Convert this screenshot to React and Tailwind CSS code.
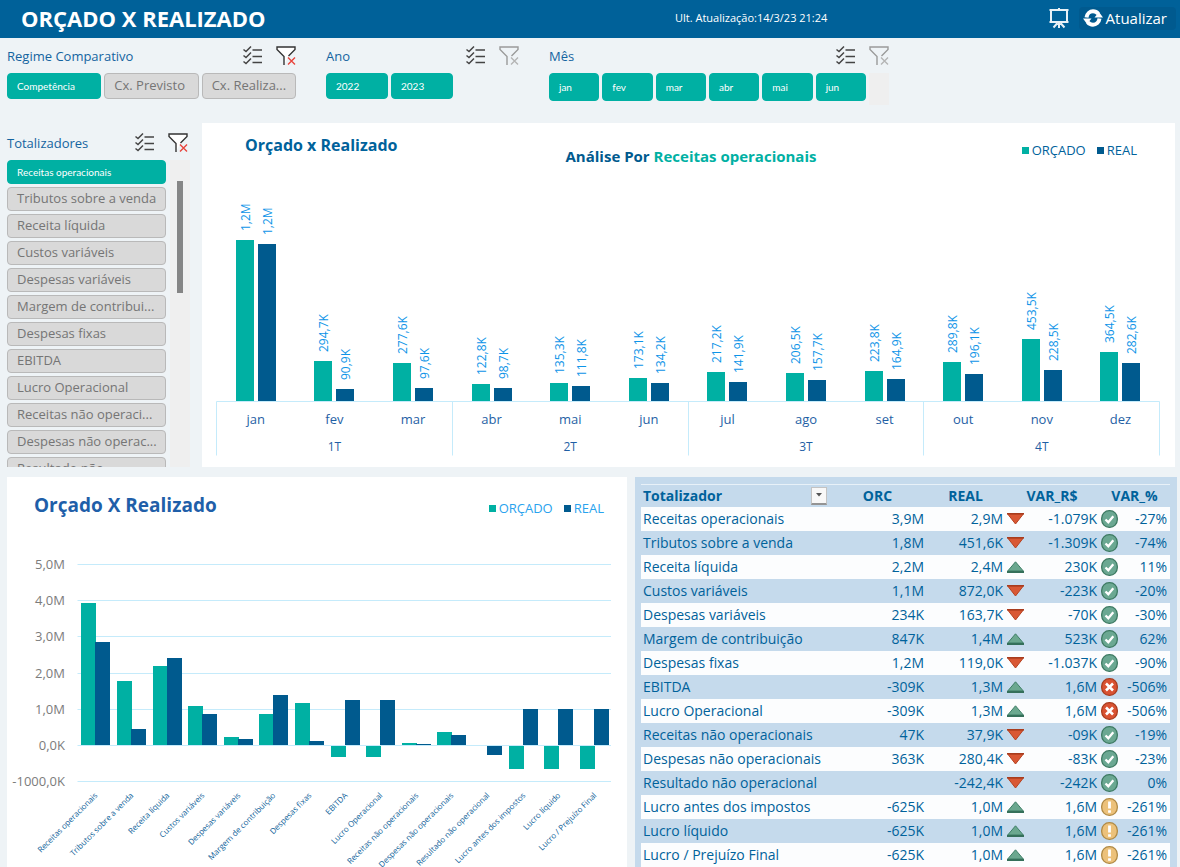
import { useState } from "react";
import clsx from "clsx";

const months = [
  { name: "jan", orc: 1186, real: 1157, orcLabel: "1,2M", realLabel: "1,2M" },
  { name: "fev", orc: 294.7, real: 90.9 },
  { name: "mar", orc: 277.6, real: 97.6 },
  { name: "abr", orc: 122.8, real: 98.7 },
  { name: "mai", orc: 135.3, real: 111.8 },
  { name: "jun", orc: 173.1, real: 134.2 },
  { name: "jul", orc: 217.2, real: 141.9 },
  { name: "ago", orc: 206.5, real: 157.7 },
  { name: "set", orc: 223.8, real: 164.9 },
  { name: "out", orc: 289.8, real: 196.1 },
  { name: "nov", orc: 453.5, real: 228.5 },
  { name: "dez", orc: 364.5, real: 282.6 },
];

// orcM / realM are in millions and feed the chart, the other fields are shown in the table
const rows = [
  { name: "Receitas operacionais", orcM: 3.93, realM: 2.85, orc: "3,9M", real: "2,9M", trend: "down", diff: "-1.079K", status: "ok", pct: "-27%" },
  { name: "Tributos sobre a venda", orcM: 1.76, realM: 0.45, orc: "1,8M", real: "451,6K", trend: "down", diff: "-1.309K", status: "ok", pct: "-74%" },
  { name: "Receita líquida", orcM: 2.17, realM: 2.4, orc: "2,2M", real: "2,4M", trend: "up", diff: "230K", status: "ok", pct: "11%" },
  { name: "Custos variáveis", orcM: 1.09, realM: 0.87, orc: "1,1M", real: "872,0K", trend: "down", diff: "-223K", status: "ok", pct: "-20%" },
  { name: "Despesas variáveis", orcM: 0.23, realM: 0.16, orc: "234K", real: "163,7K", trend: "down", diff: "-70K", status: "ok", pct: "-30%" },
  { name: "Margem de contribuição", short: "Margem de contribui...", orcM: 0.85, realM: 1.37, orc: "847K", real: "1,4M", trend: "up", diff: "523K", status: "ok", pct: "62%" },
  { name: "Despesas fixas", orcM: 1.15, realM: 0.12, orc: "1,2M", real: "119,0K", trend: "down", diff: "-1.037K", status: "ok", pct: "-90%" },
  { name: "EBITDA", orcM: -0.31, realM: 1.25, orc: "-309K", real: "1,3M", trend: "up", diff: "1,6M", status: "bad", pct: "-506%" },
  { name: "Lucro Operacional", orcM: -0.31, realM: 1.25, orc: "-309K", real: "1,3M", trend: "up", diff: "1,6M", status: "bad", pct: "-506%" },
  { name: "Receitas não operacionais", short: "Receitas não operaci...", orcM: 0.047, realM: 0.038, orc: "47K", real: "37,9K", trend: "down", diff: "-09K", status: "ok", pct: "-19%" },
  { name: "Despesas não operacionais", short: "Despesas não operac...", orcM: 0.36, realM: 0.28, orc: "363K", real: "280,4K", trend: "down", diff: "-83K", status: "ok", pct: "-23%" },
  { name: "Resultado não operacional", short: "Resultado não ...", orcM: 0, realM: -0.24, orc: "", real: "-242,4K", trend: "down", diff: "-242K", status: "ok", pct: "0%" },
  { name: "Lucro antes dos impostos", orcM: -0.625, realM: 1.0, orc: "-625K", real: "1,0M", trend: "up", diff: "1,6M", status: "warn", pct: "-261%" },
  { name: "Lucro líquido", orcM: -0.625, realM: 1.0, orc: "-625K", real: "1,0M", trend: "up", diff: "1,6M", status: "warn", pct: "-261%" },
  { name: "Lucro / Prejuízo Final", orcM: -0.625, realM: 1.0, orc: "-625K", real: "1,0M", trend: "up", diff: "1,6M", status: "warn", pct: "-261%" },
];

const formatK = (value) => `${value.toFixed(1).replace(".", ",")}K`;

function ChecklistIcon() {
  return (
    <svg width="20" height="20" viewBox="0 0 20 20" fill="none" stroke="#444" strokeWidth="1.5">
      <path d="M0.500 3.500l2.500 2 5-5M0.500 9.500l2.500 2 5-5M0.500 15.500l2.500 2 5-5" />
      <path d="M9.500 4h9.500M9.500 10.500h9.500M9.500 16.500h9.500" />
    </svg>
  );
}

function ClearFilterIcon({ active }) {
  return (
    <svg width="20" height="20" viewBox="0 0 20 20" fill="none" strokeWidth="1.400">
      <path
        d="M8 19V10.500L1 3.500V1h18v2.500L12.500 10"
        stroke={active ? "#333" : "#9a9a9a"}
        fill={active ? "#fff" : "none"}
      />
      <path d="M12 11.500l7 7M19 11.500l-7 7" stroke={active ? "#e8443c" : "#b4b4b4"} />
    </svg>
  );
}

function PresentationIcon() {
  return (
    <svg width="20" height="21" viewBox="0 0 20 21" fill="none" stroke="#e8f1f7" strokeWidth="2">
      <path d="M0.500 2h19M10 0v2M2 2v12h16V2M0.500 14h19" />
      <path d="M10 14v6M8.500 15l-4 4.500M11.500 15l4 4.500" />
    </svg>
  );
}

function RefreshIcon() {
  return (
    <svg width="20" height="18" viewBox="0 0 20 18" fill="none" stroke="#fff" strokeWidth="4">
      <path d="M3.500 8.500C4 4.500 7 2.300 10 2.300c2.200 0 4 .9 5.200 2.400" />
      <path d="M16.500 9.500c-.5 4-3.500 6.200-6.500 6.200-2.200 0-4-.9-5.200-2.400" />
      <path d="M11.500 8.500H20L16 3z M8.500 9.500H0l4 5.500z" fill="#fff" stroke="none" />
    </svg>
  );
}

function TrendIcon({ trend }) {
  return trend === "up" ? (
    <svg width="17" height="12" viewBox="0 0 17 12" role="img" aria-label="Acima">
      <path d="M8.500 0.800L16.300 10H0.700z" fill="#6ba88f" stroke="#3f7f67" />
      <path d="M0 11h17" stroke="#35705a" strokeWidth="2" />
    </svg>
  ) : (
    <svg width="17" height="12" viewBox="0 0 17 12" role="img" aria-label="Abaixo">
      <path d="M0.700 1h15.600L8.500 11z" fill="#d95834" stroke="#b5401f" />
      <path d="M0 .7h17" stroke="#a83c1e" strokeWidth="1.400" />
    </svg>
  );
}

function StatusIcon({ status }) {
  if (status === "ok") {
    return (
      <svg width="17" height="18" viewBox="0 0 17 18" role="img" aria-label="Bom">
        <rect x=".7" y=".7" width="15.600" height="16.600" rx="7.500" fill="#6ba892" stroke="#3d7a62" strokeWidth="1.300" />
        <path d="M4.500 9.500l2.800 2.700 5-6" fill="none" stroke="#fff" strokeWidth="2.300" />
      </svg>
    );
  }
  if (status === "bad") {
    return (
      <svg width="17" height="18" viewBox="0 0 17 18" role="img" aria-label="Ruim">
        <rect x=".7" y=".7" width="15.600" height="16.600" rx="7.500" fill="#d95232" stroke="#a83c1e" strokeWidth="1.300" />
        <path d="M5 5.500l7 7M12 5.500l-7 7" stroke="#fff" strokeWidth="2.600" />
      </svg>
    );
  }
  return (
    <svg width="17" height="18" viewBox="0 0 17 18" role="img" aria-label="Atenção">
      <rect x=".7" y=".7" width="15.600" height="16.600" rx="7.500" fill="#ecc17a" stroke="#b08a45" strokeWidth="1.300" />
      <path d="M8.500 3.500v7M8.500 12.300v2.500" stroke="#fff" strokeWidth="2.800" />
    </svg>
  );
}

function SlicerHeader({ title, active }) {
  return (
    <div className="flex h-5 items-center">
      <h2 className="flex-1 text-[13px] leading-5 text-[#1464a0]">{title}</h2>
      <button type="button" aria-label={`Seleção múltipla: ${title}`}>
        <ChecklistIcon />
      </button>
      <button type="button" aria-label={`Limpar filtro: ${title}`} className="ml-[13px]">
        <ClearFilterIcon active={active} />
      </button>
    </div>
  );
}

function SlicerButton({ label, selected, onClick, className }) {
  return (
    <button
      type="button"
      aria-pressed={selected}
      onClick={onClick}
      className={clsx(
        "rounded-[4px] border pl-[9px] text-left whitespace-nowrap",
        selected
          ? "border-[#00b0a3] bg-[#00b0a3] font-[Lato,sans-serif] text-[10px] text-white"
          : "border-[#b9b9b9] bg-[#d9d9d9] text-[13px] text-[#757575]",
        className
      )}
    >
      {label}
    </button>
  );
}

function Legend({ className }) {
  return (
    <ul className={clsx("flex gap-[11px] text-[13px] leading-5", className)}>
      <li className="flex items-center gap-[3px]">
        <span className="size-[7px] bg-[#00b0a3]" />
        ORÇADO
      </li>
      <li className="flex items-center gap-[3px]">
        <span className="size-[7px] bg-[#005a8e]" />
        REAL
      </li>
    </ul>
  );
}

function MonthlyChart() {
  const left = 14.5;
  const step = 78.6;
  const base = 228.5;
  const scale = 0.1357;

  const bar = (value, label, x) => {
    const height = Math.round(value * scale);
    return (
      <>
        <rect x={Math.round(x)} y={228 - height} width="18" height={height} />
        <text
          transform={`translate(${Math.round(x) + 14} ${219 - height}) rotate(-90)`}
          className="fill-[#0d94e8] text-[12px] font-medium"
        >
          {label}
        </text>
      </>
    );
  };

  return (
    <svg viewBox="0 0 973 294" className="block w-full" role="img" aria-label="Orçado x Realizado por mês">
      {months.map((m, i) => {
        const center = left + step * (i + 0.5);
        return (
          <g key={m.name}>
            <g className="fill-[#00b0a3]">{bar(m.orc, m.orcLabel || formatK(m.orc), center - 20)}</g>
            <g className="fill-[#005a8e]">{bar(m.real, m.realLabel || formatK(m.real), center + 2)}</g>
            <text x={center} y="251" textAnchor="middle" className="fill-[#1f5fa5] text-[13px]">
              {m.name}
            </text>
          </g>
        );
      })}
      <path d={`M${left} ${base}H957.500`} stroke="#c5ebfb" />
      {[0, 1, 2, 3, 4].map((q) => (
        <path key={q} d={`M${Math.round(14 + q * step * 3) + 0.5} ${base}v54`} stroke="#c5ebfb" />
      ))}
      {["1T", "2T", "3T", "4T"].map((q, i) => (
        <text
          key={q}
          x={left + step * 3 * (i + 0.5)}
          y="278"
          textAnchor="middle"
          className="fill-[#1f5fa5] text-[12px]"
        >
          {q}
        </text>
      ))}
    </svg>
  );
}

function TotalsChart() {
  const left = 70.5;
  const step = 35.6;
  const unit = 36.2;
  const zero = 208;
  const ticks = ["5,0M", "4,0M", "3,0M", "2,0M", "1,0M", "0,0K", "-1000,0K"];

  const bar = (value, x, fill) => {
    const height = Math.round(Math.abs(value) * unit);
    return <rect x={x} y={value < 0 ? zero + 1 : zero - height} width="15" height={height} className={fill} />;
  };

  return (
    <svg viewBox="0 0 620 330" className="block w-full" role="img" aria-label="Orçado x Realizado por totalizador">
      {ticks.map((tick, i) => {
        const y = Math.round(27 + i * unit) + 0.5;
        return (
          <g key={tick}>
            <path d={`M${left} ${y}H604`} stroke="#c5ebfb" />
            <text x="58" y={y + 4} textAnchor="end" className="fill-[#7c7c7c] text-[13px]">
              {tick}
            </text>
          </g>
        );
      })}
      {rows.map((row, i) => {
        const center = left + step * (i + 0.5);
        const x = Math.round(center);
        return (
          <g key={row.name}>
            {bar(row.orcM, x - 14, "fill-[#00b0a3]")}
            {bar(row.realM, x, "fill-[#005a8e]")}
            <text
              transform={`translate(${x + 3} 259) rotate(-45)`}
              textAnchor="end"
              className="fill-[#0f629a] text-[8px] font-medium"
            >
              {row.name}
            </text>
          </g>
        );
      })}
    </svg>
  );
}

function TotalsTable() {
  return (
    <table className="w-full table-fixed border-collapse text-[14px] leading-6 text-[#00629b]">
      <colgroup>
        <col />
        <col className="w-[97px]" />
        <col className="w-[79px]" />
        <col className="w-[94px]" />
        <col className="w-[71px]" />
      </colgroup>
      <thead>
        <tr className="h-[23px] text-[14px] leading-[22px] shadow-[inset_0_1px_0_#e8f1f8]">
          <th className="p-0 pr-[2px] pl-[2px] text-left">
            <div className="flex items-center justify-between">
              Totalizador
              <button
                type="button"
                aria-label="Filtrar Totalizador"
                className="flex h-[18px] w-4 items-center justify-center border border-b-2 border-[#c3c3c3] border-b-[#949494] bg-[#f8f8f8]"
              >
                <svg width="6" height="4" viewBox="0 0 6 4">
                  <path d="M0 0h6L3 3.500z" fill="#555" />
                </svg>
              </button>
            </div>
          </th>
          <th className="p-0">ORC</th>
          <th className="p-0">REAL</th>
          <th className="p-0">VAR_R$</th>
          <th className="p-0">VAR_%</th>
        </tr>
      </thead>
      <tbody>
        {rows.map((row) => (
          <tr key={row.name} className="h-6 odd:bg-[#fcfdfe]">
            <td className="truncate p-0 pl-[2px]">{row.name}</td>
            <td className="p-0 pr-[2px] text-right">{row.orc}</td>
            <td className="p-0 pr-[2px] text-right">{row.real}</td>
            <td className="p-0 px-[2px]">
              <div className="flex items-center justify-between">
                <TrendIcon trend={row.trend} />
                {row.diff}
              </div>
            </td>
            <td className="p-0 pr-[3px] pl-[2px]">
              <div className="flex items-center justify-between">
                <StatusIcon status={row.status} />
                {row.pct}
              </div>
            </td>
          </tr>
        ))}
      </tbody>
    </table>
  );
}

export default function App() {
  const [regime, setRegime] = useState("Competência");
  const [total, setTotal] = useState("Receitas operacionais");

  return (
    <div className="flex min-h-screen flex-col bg-[#eef3f6] font-['Open_Sans','Noto_Sans',sans-serif]">
      <header className="grid h-[38px] grid-cols-[654fr_501fr] items-center bg-[#006199] pr-1 pb-[2px] pl-[21px] text-white">
        <h1 className="text-[22px] leading-7 font-bold">ORÇADO X REALIZADO</h1>
        <div className="flex items-center gap-[10px]">
          <p className="flex-1 text-[11px]">Ult. Atualização:14/3/23 21:24</p>
          <button type="button" aria-label="Modo apresentação">
            <PresentationIcon />
          </button>
          <button
            type="button"
            className="flex h-[23px] items-center gap-[3px] rounded-[4px] bg-[#005a8f] pr-[9px] pl-1 text-[15px]"
          >
            <RefreshIcon />
            Atualizar
          </button>
        </div>
      </header>

      {/* Filters */}
      <section className="flex h-[85px] gap-[30px] pt-2 pl-[7px]">
        <div className="w-[289px]">
          <SlicerHeader title="Regime Comparativo" active />
          <div className="mt-[7px] flex gap-[3px]">
            {["Competência", "Cx. Previsto", "Cx. Realiza..."].map((label) => (
              <SlicerButton
                key={label}
                label={label}
                selected={regime === label}
                onClick={() => setRegime(label)}
                className="h-[26px] flex-1 basis-0"
              />
            ))}
          </div>
        </div>
        <div className="w-[193px]">
          <SlicerHeader title="Ano" />
          <div className="mt-[7px] flex gap-[3px]">
            <SlicerButton label="2022" selected className="h-[26px] w-[62px]" />
            <SlicerButton label="2023" selected className="h-[26px] w-[62px]" />
          </div>
        </div>
        <div className="w-[340px]">
          <SlicerHeader title="Mês" />
          <div className="mt-[7px] flex gap-[3px]">
            {["jan", "fev", "mar", "abr", "mai", "jun"].map((label) => (
              <SlicerButton key={label} label={label} selected className="h-7 flex-1" />
            ))}
            <div className="h-8 w-5 bg-[#efefef]" />
          </div>
        </div>
      </section>

      <section className="flex">
        <aside className="w-[202px] shrink-0 pt-[10px] pl-[7px]">
          <div className="w-[181px]">
            <SlicerHeader title="Totalizadores" active />
          </div>
          <div className="mt-[7px] flex h-[307px] gap-1 overflow-hidden">
            <div className="flex w-[159px] flex-col gap-[3px]">
              {rows.slice(0, 12).map((row) => (
                <SlicerButton
                  key={row.name}
                  label={row.short || row.name}
                  selected={total === row.name}
                  onClick={() => setTotal(row.name)}
                  className="h-6 shrink-0"
                />
              ))}
            </div>
            <div className="flex w-5 justify-center bg-[#efefef] pt-[21px]">
              <div className="h-28 w-[6px] bg-[#858585]" />
            </div>
          </div>
        </aside>

        <div className="mr-[5px] flex-1 bg-white">
          <div className="grid h-[50px] grid-cols-[1fr_auto_1fr] items-start pt-3 pr-[38px] pl-[43px]">
            <h2 className="text-[16px] leading-5 font-bold text-[#00629b]">Orçado x Realizado</h2>
            <h3 className="mt-[11px] text-[15px] leading-5 font-bold text-[#005a8e]">
              Análise Por <span className="text-[#00b0a3]">{total}</span>
            </h3>
            <Legend className="mt-[5px] justify-end text-[#00629b]" />
          </div>
          <MonthlyChart />
        </div>
      </section>

      <section className="mt-[10px] grid flex-1 grid-cols-[620fr_542fr] gap-2 pr-[3px] pl-[7px]">
        <div className="bg-white">
          <div className="flex h-[60px] items-start justify-between pt-4 pr-[23px] pl-[27px]">
            <h2 className="text-[19px] leading-6 font-bold text-[#1f5fa9]">Orçado X Realizado</h2>
            <Legend className="mt-[5px] text-[#29a3ee]" />
          </div>
          <TotalsChart />
        </div>
        <div className="bg-[#c5daec] pt-[7px] pr-[7px] pl-[6px]">
          <TotalsTable />
        </div>
      </section>
    </div>
  );
}
